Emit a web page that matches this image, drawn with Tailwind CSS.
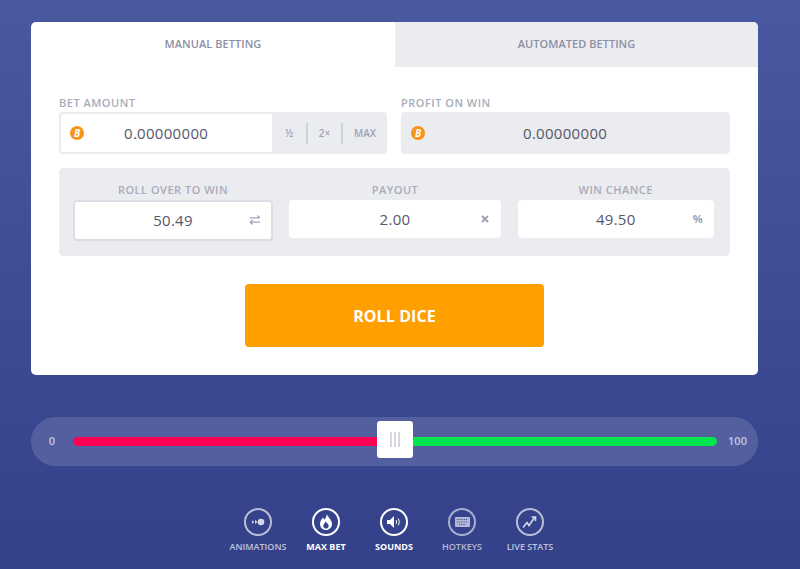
<!DOCTYPE html>
<html lang="en">
<head>
    <meta charset="UTF-8">
    <meta name="viewport" content="width=device-width, initial-scale=1.0">
    <title>Dice</title>
    <script src="https://cdn.jsdelivr.net/npm/@tailwindcss/browser@4"></script>
</head>
<body class="h-[569px] overflow-hidden bg-gradient-to-b from-[#4a58a0] to-[#34418a] font-['Open_Sans',sans-serif]">
    <div class="pl-[31px] pr-[42px] pt-[22px]">
        <!-- betting card -->
        <div class="h-[353px] bg-white rounded-[5px] overflow-hidden">
            <div class="flex h-[45px] text-[11px] font-semibold text-[#8d8fa5] tracking-[.05px]">
                <div class="w-[364px] flex items-center justify-center pb-[1px]">MANUAL BETTING</div>
                <div class="flex-1 flex items-center justify-center bg-[#ebecf0] pb-[1px]">AUTOMATED BETTING</div>
            </div>
            <div class="px-[28px] pt-[29px]">
                <div class="grid grid-cols-[328px_329px] gap-x-[14px]">
                    <div>
                        <div class="h-[16px] text-[11px] leading-[14px] font-semibold tracking-[.5px] text-[#a9abbb]">BET AMOUNT</div>
                        <div class="h-[42px] flex bg-[#ebecf0] rounded-[4px]">
                            <div class="w-[213px] flex items-center bg-white border-2 border-r-0 border-[#ebecf0] rounded-l-[4px] pl-[9px]">
                                <span class="w-[14px] h-[14px] shrink-0 rounded-full bg-[#f7931a] flex items-center justify-center text-white text-[10px] leading-none font-bold italic">B</span>
                                <span class="ml-[40px] text-[15px] font-medium text-[#55576a] tracking-[.3px]">0.00000000</span>
                            </div>
                            <div class="flex-1 flex items-center text-[10px] font-semibold text-[#a0a2b4]">
                                <span class="w-[34px] text-center">½</span>
                                <span class="w-[2px] h-[21px] bg-[#cfd1da]"></span>
                                <span class="w-[33px] text-center">2×</span>
                                <span class="w-[2px] h-[21px] bg-[#cfd1da]"></span>
                                <span class="flex-1 text-center">MAX</span>
                            </div>
                        </div>
                    </div>
                    <div>
                        <div class="h-[16px] text-[11px] leading-[14px] font-semibold tracking-[.5px] text-[#a9abbb]">PROFIT ON WIN</div>
                        <div class="h-[42px] flex items-center bg-[#ebecf0] rounded-[4px] pl-[10px]">
                            <span class="w-[14px] h-[14px] shrink-0 rounded-full bg-[#f7931a] flex items-center justify-center text-white text-[10px] leading-none font-bold italic">B</span>
                            <span class="ml-[98px] text-[15px] font-medium text-[#55576a] tracking-[.3px]">0.00000000</span>
                        </div>
                    </div>
                </div>
                <!-- roll settings -->
                <div class="mt-[14px] h-[88px] bg-[#ebecf0] rounded-[5px] pl-[14px] pt-[15px] grid grid-cols-[200px_212px_197px] gap-x-[16px]">
                    <div>
                        <div class="h-[17px] text-center text-[11px] leading-[14px] font-semibold tracking-[.5px] text-[#a9abbb]">ROLL OVER TO WIN</div>
                        <div class="relative h-[41px] flex items-center justify-center bg-white border-2 border-[#dcdde4] rounded-[4px] text-[15px] font-medium tracking-[.3px] text-[#55576a]">
                            50.49
                            <svg class="absolute right-[10px] top-[12px] w-[12px] h-[12px]" viewBox="0 0 12 12" fill="none" stroke="#a0a2b4" stroke-width="1.2"><path d="M1 3.800h9.500M8.400 1.500l2.300 2.300M11 8.200H1.500M3.600 5.900L1.300 8.200 3.600 10.500"/></svg>
                        </div>
                    </div>
                    <div>
                        <div class="h-[17px] text-center text-[11px] leading-[14px] font-semibold tracking-[.5px] text-[#a9abbb]">PAYOUT</div>
                        <div class="relative h-[38px] flex items-center justify-center bg-white rounded-[4px] text-[15px] font-medium tracking-[.3px] text-[#55576a]">
                            2.00
                            <svg class="absolute right-[12px] top-[15px] w-[8px] h-[8px]" viewBox="0 0 8 8" stroke="#a0a2b4" stroke-width="2"><path d="M1 1l6 6M7 1L1 7"/></svg>
                        </div>
                    </div>
                    <div class="ml-[.5px]">
                        <div class="h-[17px] text-center text-[11px] leading-[14px] font-semibold tracking-[.5px] text-[#a9abbb]">WIN CHANCE</div>
                        <div class="relative h-[38px] flex items-center justify-center bg-white rounded-[4px] text-[15px] font-medium tracking-[.3px] text-[#55576a]">
                            49.50
                            <span class="absolute right-[11px] top-[10px] text-[11px] leading-[18px] font-bold text-[#a0a2b4]">%</span>
                        </div>
                    </div>
                </div>
                <div class="mt-[28px] flex justify-center">
                    <button class="w-[299px] h-[63px] bg-[#ff9f00] rounded-[4px] text-white text-[16px] font-bold tracking-[.1px]">ROLL DICE</button>
                </div>
            </div>
        </div>

        <!-- slider -->
        <div class="mt-[42px] h-[49px] rounded-full bg-[#535f9f] flex items-center text-[11px] font-semibold text-[#c3c8e0]">
            <span class="w-[42px] text-center">0</span>
            <div class="relative w-[644px] h-[9px] flex">
                <div class="w-[322px] rounded-l-full bg-[#ff0055]"></div>
                <div class="flex-1 rounded-r-full bg-[#00e64c]"></div>
                <div class="absolute left-[304px] top-[-16px] w-[36px] h-[37px] bg-white rounded-[3px] flex items-center justify-center gap-[2px]">
                    <span class="w-[2px] h-[15px] bg-[#d5d6de]"></span>
                    <span class="w-[2px] h-[15px] bg-[#d5d6de]"></span>
                    <span class="w-[2px] h-[15px] bg-[#d5d6de]"></span>
                </div>
            </div>
            <span class="flex-1 text-center">100</span>
        </div>

        <!-- options -->
        <div class="mt-[42px] -ml-[1px] flex justify-center text-[9px] font-semibold">
            <div class="w-[68px] flex flex-col items-center text-[#c0c5dc]">
                <div class="w-[28px] h-[28px] rounded-full border-2 border-[#b9bed6] flex items-center justify-center">
                    <svg class="w-[16px] h-[10px]" viewBox="0 0 16 10" fill="#d5d8e8"><circle cx="11" cy="5" r="3.300"/><path d="M7.500 5L5 3v4zM4.300 5L2 3.300v3.400z"/></svg>
                </div>
                <span class="mt-[4px]">ANIMATIONS</span>
            </div>
            <div class="w-[68px] flex flex-col items-center text-white font-bold">
                <div class="w-[28px] h-[28px] rounded-full border-2 border-white flex items-center justify-center">
                    <svg class="w-[14px] h-[16px]" viewBox="0 0 14 16" fill="#fff"><path d="M7.500 0c.5 2.600-1 4-2.300 5.600C4.600 4.900 4.300 4.200 4.200 3.500 2.400 5.200 1 7.300 1 10c0 3.400 2.700 6 6 6s6-2.600 6-6C13 6 9.500 3.800 7.500 0zM7 14.500c-1.500 0-2.700-1.100-2.700-2.600 0-1.500 1.400-2.300 2.500-4.400 1.200 1.700 2.900 2.700 2.900 4.400 0 1.500-1.200 2.600-2.700 2.600z"/></svg>
                </div>
                <span class="mt-[4px]">MAX BET</span>
            </div>
            <div class="w-[68px] flex flex-col items-center text-white font-bold">
                <div class="w-[28px] h-[28px] rounded-full border-2 border-white flex items-center justify-center">
                    <svg class="w-[15px] h-[12px]" viewBox="0 0 15 12"><path d="M0 4h3l4-4v12L3 8H0z" fill="#fff"/><path d="M9 4c.8.9.8 3.100 0 4M11 2.500c1.600 1.800 1.600 5.200 0 7" fill="none" stroke="#fff" stroke-width="1"/></svg>
                </div>
                <span class="mt-[4px]">SOUNDS</span>
            </div>
            <div class="w-[68px] flex flex-col items-center text-[#b4b9d6]">
                <div class="w-[28px] h-[28px] rounded-full border-2 border-[#a9afcf] flex items-center justify-center">
                    <svg class="w-[15px] h-[10px]" viewBox="0 0 15 10"><rect width="15" height="10" rx="1" fill="#b4b9d6"/><path d="M2 2.500h11M2 5h11M4 7.500h7" stroke="#34418a" stroke-width=".9" stroke-dasharray="1 .8"/></svg>
                </div>
                <span class="mt-[4px]">HOTKEYS</span>
            </div>
            <div class="w-[68px] flex flex-col items-center text-[#c0c5dc]">
                <div class="w-[28px] h-[28px] rounded-full border-2 border-[#b9bed6] flex items-center justify-center">
                    <svg class="w-[16px] h-[14px]" viewBox="0 0 16 14" fill="none" stroke="#d5d8e8" stroke-width="1.600"><path d="M1 12.500l4-5 2 3 5.500-8M9.500 2h4v4"/></svg>
                </div>
                <span class="mt-[4px]">LIVE STATS</span>
            </div>
        </div>
    </div>
</body>
</html>
